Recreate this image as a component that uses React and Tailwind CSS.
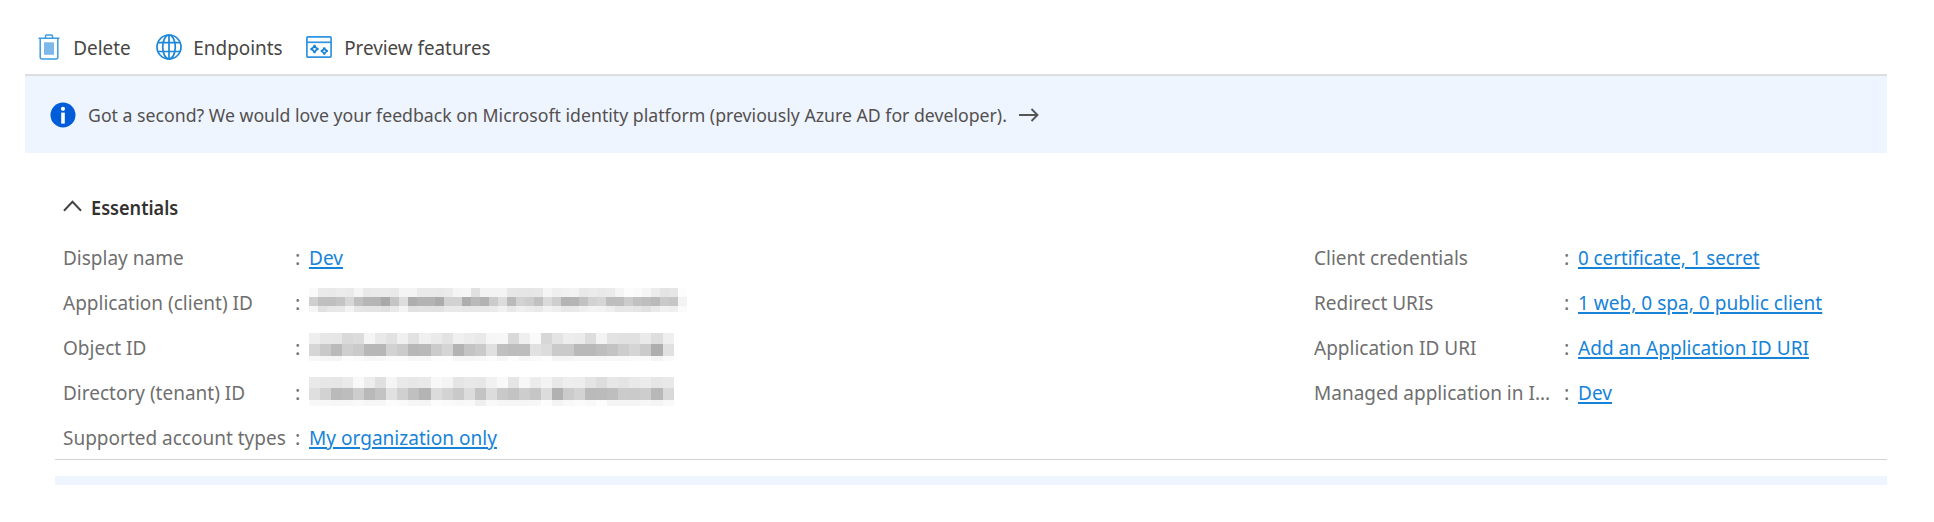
import React from 'react';

const idMosaics = {
  client: {
    cell: 'w-[9px]',
    lift: 'pb-[5px]',
    bands: ['h-[9px]', 'h-[9px]', 'h-[6px]'],
    rows: [
      'fa ea e9 ec ea f5 e9 ea eb e9 f4 f4 ea ea e9 eb f5 f6 e1 f3 f3 f4 e7 e6 e6 e7 f5 ef f1 f3 e9 eb e9 eb f5 fc fa f5 ec e4 e6 fd',
      'cf c0 bf c4 d7 c0 b6 b5 a9 c5 dd ae b4 b4 ac d2 d2 ae ba b2 cb dc ba d2 cd c1 da ce b4 b5 c2 d2 d6 be be cc c1 be ba ca c6 f3',
      'f5 e1 e7 e8 f3 e6 e4 e4 e1 e9 f4 e2 e3 e3 e2 e9 e9 e7 e8 e8 ea f1 e8 ef ec e9 f2 ee e8 e9 ef f3 f2 ee e6 e8 e5 e1 e9 f1 ef fb',
    ],
  },
  object: {
    cell: 'w-[11.060px]',
    lift: 'pb-px',
    bands: ['h-[11px]', 'h-[12px]', 'h-[5px]'],
    rows: [
      'ee e7 e6 d9 dc f5 e9 e2 f0 e2 f0 ea e3 f0 ec e9 f6 f7 d9 ef fa d7 e4 ed eb dd f3 e3 e1 e1 ea de ef',
      'd6 c9 ba cf ca b7 b7 d2 cb b7 b9 cb d5 b3 c4 ca e0 c0 bd bd e1 dc ca ca b9 b9 be c3 cd d5 cb ae e1',
      'f8 f5 f5 fd fb f7 f8 fb fb f7 f7 fd fd f6 f6 f8 fc f7 fd f7 fa fd f5 f5 f8 f8 f7 f8 f8 fa fa f4 fa',
    ],
  },
  tenant: {
    cell: 'w-[11.060px]',
    lift: 'pb-[2px]',
    bands: ['h-[11px]', 'h-[12px]', 'h-[6px]'],
    rows: [
      'e9 e7 e6 ea f9 ed e0 f5 e9 e7 e9 f8 f4 e5 e8 e7 f1 f9 e5 f7 ec f3 e8 ee ed e4 dd e7 e4 e9 ec e6 e8',
      'df d2 ba bd cd b9 c3 e1 d0 c0 b4 dc d3 c9 dc c3 dc c9 c3 cd c5 dc b1 cb d3 ba bb be cb ca cd b8 d9',
      'f8 f8 f6 f7 f9 f6 f7 fc fa f6 f5 fc fa f8 f9 ef f9 f6 f6 f6 f7 fd f4 f8 fb f8 fd f5 f5 f5 f7 f4 f9',
    ],
  },
};

function Redacted({ mosaic }) {
  return (
    <div className={`flex flex-col ${mosaic.lift}`}>
      {mosaic.rows.map((row, r) => (
        <div key={r} className={`flex ${mosaic.bands[r]}`}>
          {row.split(' ').map((v, i) => (
            <span
              key={i}
              className={`h-full shrink-0 ${mosaic.cell}`}
              style={{ backgroundColor: `#${v}${v}${v}` }}
            />
          ))}
        </div>
      ))}
    </div>
  );
}

function Narrow({ children, className = 'scale-x-[0.953]' }) {
  return <span className={`inline-block origin-left ${className}`}>{children}</span>;
}

function Link({ children, className = 'scale-x-[0.953]' }) {
  return (
    <a href="#" className={`inline-block origin-left text-[#1683d8] underline decoration-[1.5px] underline-offset-[2px] ${className}`}>
      {children}
    </a>
  );
}

function Row({ label, labelWidth, children }) {
  return (
    <div className="flex h-[45px] items-center">
      <div className={`shrink-0 ${labelWidth}`}>
        <Narrow className="scale-x-[0.95]">{label}</Narrow>
      </div>
      <div className="w-[14px] shrink-0">:</div>
      <div>{children}</div>
    </div>
  );
}

function TrashIcon() {
  return (
    <svg className="h-[26px] w-[22px]" viewBox="0 0 22 26" fill="none" stroke="#3d9be0" strokeWidth="1.5">
      <path d="M.5 4.2h21M7.500 4V2.200Q7.500.9 8.800.9h4.400q1.300 0 1.300 1.300V4" />
      <path d="M2.200 4.500V23q0 2 2 2h13.600q2 0 2-2V4.500" />
      <rect x="6" y="8.300" width="10" height="12.500" fill="#7db8ea" stroke="none" />
    </svg>
  );
}

function GlobeIcon() {
  return (
    <svg className="size-[26px]" viewBox="0 0 26 26" fill="none" stroke="#1c86d9" strokeWidth="1.700">
      <circle cx="13" cy="13" r="12" />
      <ellipse cx="13" cy="13" rx="6.300" ry="12" />
      <path d="M13 1v24M2.200 8.700h21.600M2.200 17.500h21.600" />
    </svg>
  );
}

function PreviewIcon() {
  return (
    <svg className="h-[22px] w-[26px]" viewBox="0 0 26 22" fill="none" stroke="#3093df" strokeWidth="1.700">
      <rect x=".9" y=".9" width="24.200" height="20.200" rx="1" />
      <path d="M1 6.300h24" />
      <path d="M8.500 8.800Q9.200 12.300 12.500 13Q9.200 13.700 8.500 17.200Q7.800 13.700 4.500 13Q7.800 12.300 8.500 8.800Z" stroke="#1683d8" />
      <path d="M18.300 11.300Q18.800 14.500 21.800 15Q18.800 15.500 18.300 18.700Q17.800 15.500 14.800 15Q17.800 14.500 18.300 11.300Z" stroke="#1683d8" />
    </svg>
  );
}

function InfoIcon() {
  return (
    <svg className="size-[26px]" viewBox="0 0 26 26">
      <circle cx="13" cy="13" r="12.500" fill="#015cda" />
      <circle cx="13" cy="6.800" r="2.100" fill="#fff" />
      <rect x="11.200" y="10.600" width="3.600" height="11" fill="#fff" />
    </svg>
  );
}

export default function App() {
  return (
    <div className="h-[522px] w-[1934px] overflow-hidden bg-white pl-[25px] pr-[47px] font-['Noto_Sans',sans-serif] text-[20px] leading-[30px] whitespace-nowrap text-[#6f6f6f]">
      <div className="flex h-[76px] items-center border-b-2 border-[#dcdddf] pt-[19px] text-[#484644]">
        <div className="flex w-[117px] items-center pl-[13px]">
          <TrashIcon />
          <Narrow className="scale-x-[0.945] pt-[3px] pl-[14px]">Delete</Narrow>
        </div>
        <div className="flex w-[148px] items-center pl-[14px]">
          <GlobeIcon />
          <Narrow className="scale-x-[0.945] pt-[3px] pl-[12px]">Endpoints</Narrow>
        </div>
        <div className="flex items-center pl-[16px]">
          <PreviewIcon />
          <Narrow className="scale-x-[0.94] pt-[3px] pl-[13px]">Preview features</Narrow>
        </div>
      </div>

      <div className="flex h-[77px] items-center bg-[#eef5ff] pl-[25px] text-[17.690px] text-[#53504f]">
        <InfoIcon />
        <span className="pt-px pl-[12px]">
          Got a second? We would love your feedback on Microsoft identity platform (previously Azure AD for developer).
        </span>
        <svg className="ml-[12px] h-[14px] w-[20px]" viewBox="0 0 20 14" fill="none" stroke="#555" strokeWidth="1.900">
          <path d="M0 7h18.500M12.500 1l6 6-6 6" />
        </svg>
      </div>

      <div className="flex h-[80px] items-end pl-[38px] pb-[10px] text-[#323130]">
        <svg className="mb-[11px] h-[12px] w-[19px]" viewBox="0 0 20 12" fill="none" stroke="#484644" strokeWidth="2.100">
          <path d="M1 11l9-9.500L19 11" />
        </svg>
        <Narrow className="scale-x-[0.905] pl-[10px] font-semibold">Essentials</Narrow>
      </div>

      <div className="ml-[30px] flex h-[227px] border-b border-[#d2d2d2] pl-[8px]">
        <div className="w-[1251px] pt-[2px]">
          <Row label="Display name" labelWidth="w-[232px]"><Link>Dev</Link></Row>
          <Row label="Application (client) ID" labelWidth="w-[232px]"><Redacted mosaic={idMosaics.client} /></Row>
          <Row label="Object ID" labelWidth="w-[232px]"><Redacted mosaic={idMosaics.object} /></Row>
          <Row label="Directory (tenant) ID" labelWidth="w-[232px]"><Redacted mosaic={idMosaics.tenant} /></Row>
          <Row label="Supported account types" labelWidth="w-[232px]"><Link>My organization only</Link></Row>
        </div>
        <div className="pt-[2px]">
          <Row label="Client credentials" labelWidth="w-[250px]"><Link className="scale-x-[0.938]">0 certificate, 1 secret</Link></Row>
          <Row label="Redirect URIs" labelWidth="w-[250px]"><Link>1 web, 0 spa, 0 public client</Link></Row>
          <Row label="Application ID URI" labelWidth="w-[250px]"><Link>Add an Application ID URI</Link></Row>
          <Row label="Managed application in I..." labelWidth="w-[250px]"><Link>Dev</Link></Row>
        </div>
      </div>
      <div className="mt-[16px] ml-[30px] h-[9px] bg-[#eef5ff]" />
    </div>
  );
}
